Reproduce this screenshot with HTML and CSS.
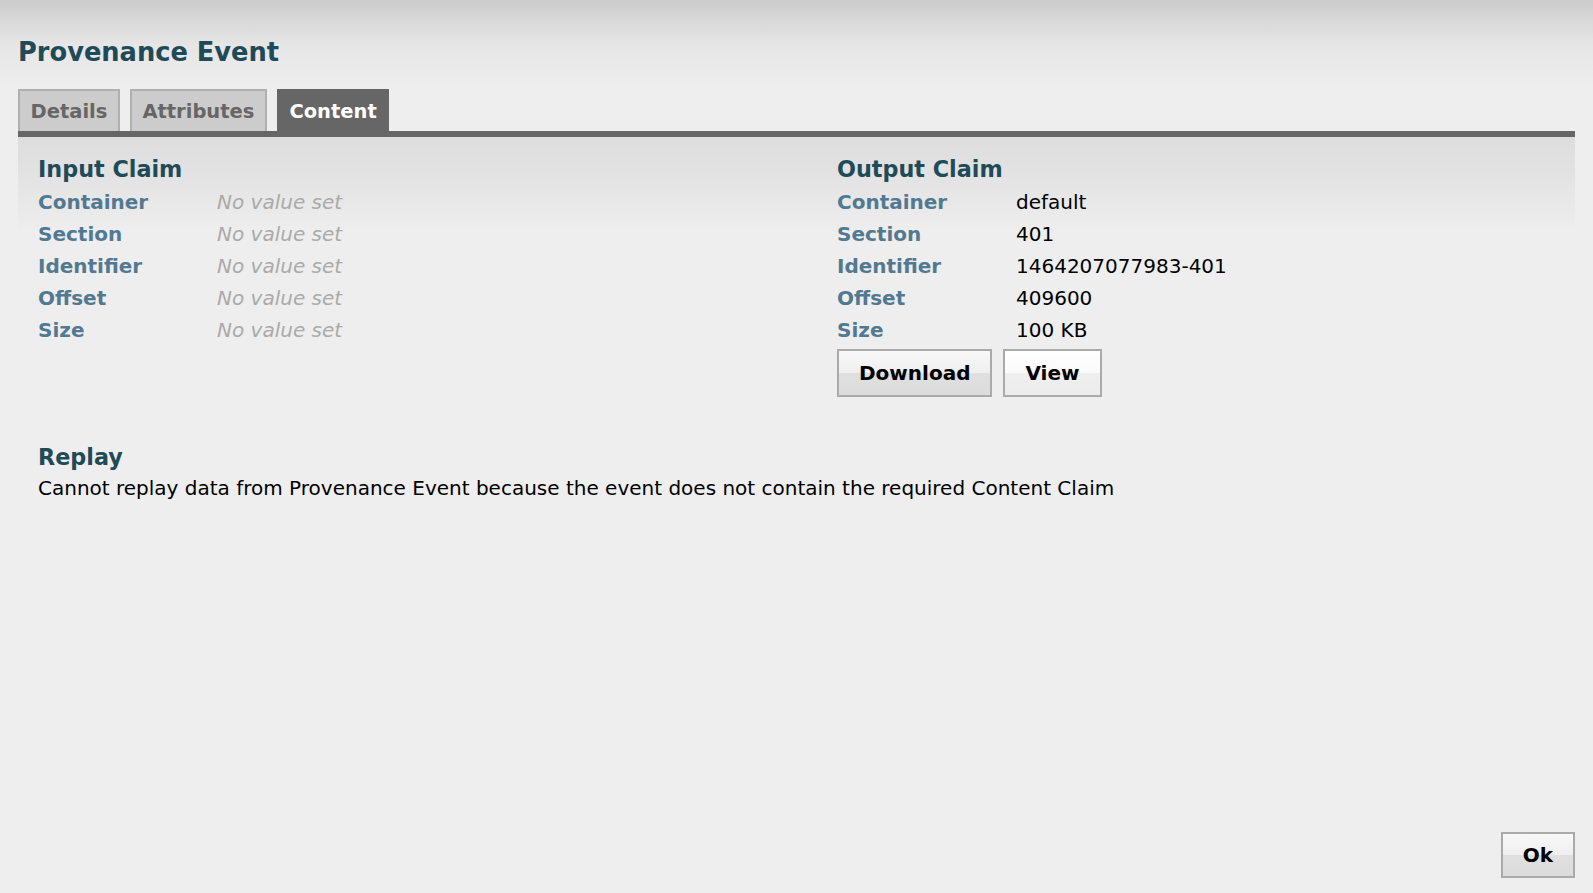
FILE: index.html
```html
<!DOCTYPE html>
<html lang="en">
<head>
<meta charset="utf-8">
<title>Provenance Event</title>
<link rel="stylesheet" href="styles.css">
</head>
<body>
<div class="dialog">
  <h1 class="dialog-title">Provenance Event</h1>
  <div class="tabs">
    <div class="tab">Details</div>
    <div class="tab">Attributes</div>
    <div class="tab tab-active">Content</div>
  </div>
  <div class="tab-bar"></div>
  <div class="panel">
    <div class="claims">
      <section class="claim">
        <h2 class="section-title">Input Claim</h2>
        <div class="row"><span class="label">Container</span><span class="unset">No value set</span></div>
        <div class="row"><span class="label">Section</span><span class="unset">No value set</span></div>
        <div class="row"><span class="label">Identifier</span><span class="unset">No value set</span></div>
        <div class="row"><span class="label">Offset</span><span class="unset">No value set</span></div>
        <div class="row"><span class="label">Size</span><span class="unset">No value set</span></div>
      </section>
      <section class="claim">
        <h2 class="section-title">Output Claim</h2>
        <div class="row"><span class="label">Container</span><span class="value">default</span></div>
        <div class="row"><span class="label">Section</span><span class="value">401</span></div>
        <div class="row"><span class="label">Identifier</span><span class="value">1464207077983-401</span></div>
        <div class="row"><span class="label">Offset</span><span class="value">409600</span></div>
        <div class="row"><span class="label">Size</span><span class="value">100 KB</span></div>
        <div class="actions">
          <button class="btn">Download</button>
          <button class="btn btn-light">View</button>
        </div>
      </section>
    </div>
    <section class="replay">
      <h2 class="section-title replay-title">Replay</h2>
      <p class="replay-text">Cannot replay data from Provenance Event because the event does not contain the required Content Claim</p>
    </section>
  </div>
  <footer class="dialog-footer">
    <button class="btn btn-ok">Ok</button>
  </footer>
</div>
</body>
</html>
```

FILE: styles.css
```css
html, body {
  margin: 0;
  padding: 0;
  height: 100%;
}

body {
  font-family: "DejaVu Sans", Verdana, sans-serif;
  font-size: 20px;
  color: #000;
  background: linear-gradient(to bottom, #cccccc 0px, #e6e6e6 45px, #eeeeee 90px) no-repeat;
  background-color: #eeeeee;
}

.dialog {
  box-sizing: border-box;
  height: 100vh;
  display: flex;
  flex-direction: column;
  padding: 0 18px 15px 18px;
}

.dialog-title {
  margin: 0;
  padding-top: 37px;
  font-size: 25.7px;
  line-height: 30px;
  font-weight: bold;
  color: #1f4a57;
}

.tabs {
  display: flex;
  gap: 10px;
  margin-top: 22px;
  height: 42px;
}

.tab {
  box-sizing: border-box;
  height: 42px;
  padding: 2px 10.5px 0;
  border: 2px solid #b0b0b0;
  border-bottom: none;
  background: #cccccc;
  color: #666666;
  font-size: 19.5px;
  font-weight: bold;
  line-height: 38px;
}

.tab-active {
  background: #666666;
  border-color: #666666;
  color: #ffffff;
}

.tab-bar {
  height: 6px;
  background: #666666;
}

.panel {
  flex: 1;
  padding: 17px 20px 0;
  background: linear-gradient(to bottom, #dddddd 0px, #e3e3e3 40px, #eeeeee 95px) no-repeat;
  background-color: #eeeeee;
}

.claims {
  display: grid;
  grid-template-columns: 799px 1fr;
  align-items: start;
}

.section-title {
  margin: 0 0 2px;
  font-size: 22.3px;
  line-height: 30px;
  font-weight: bold;
  color: #1f4a57;
}

.row {
  display: grid;
  grid-template-columns: 179px 1fr;
  line-height: 32px;
}

.label {
  font-weight: bold;
  color: #527991;
}

.unset {
  font-style: italic;
  color: #aaaaaa;
}

.value {
  color: #000;
}

.actions {
  display: flex;
  gap: 11px;
  margin-top: 3px;
}

.btn {
  box-sizing: border-box;
  height: 48px;
  padding: 0 20px;
  border: 2px solid #aaaaaa;
  font-family: "DejaVu Sans", Verdana, sans-serif;
  font-size: 20px;
  font-weight: bold;
  color: #000;
  background: linear-gradient(to bottom, #f8f8f8 0%, #efefef 50%, #dfdfdf 50%, #dcdcdc 100%);
  cursor: pointer;
}

.btn-light {
  background: linear-gradient(to bottom, #ffffff 0%, #fafafa 50%, #efefef 50%, #ececec 100%);
}

.replay {
  margin-top: 45px;
}

.replay-title {
  margin-bottom: 0;
}

.replay-text {
  margin: 0;
  line-height: 32px;
}

.dialog-footer {
  display: flex;
  justify-content: flex-end;
}

.btn-ok {
  height: 46px;
  padding: 0 20px;
}
```
